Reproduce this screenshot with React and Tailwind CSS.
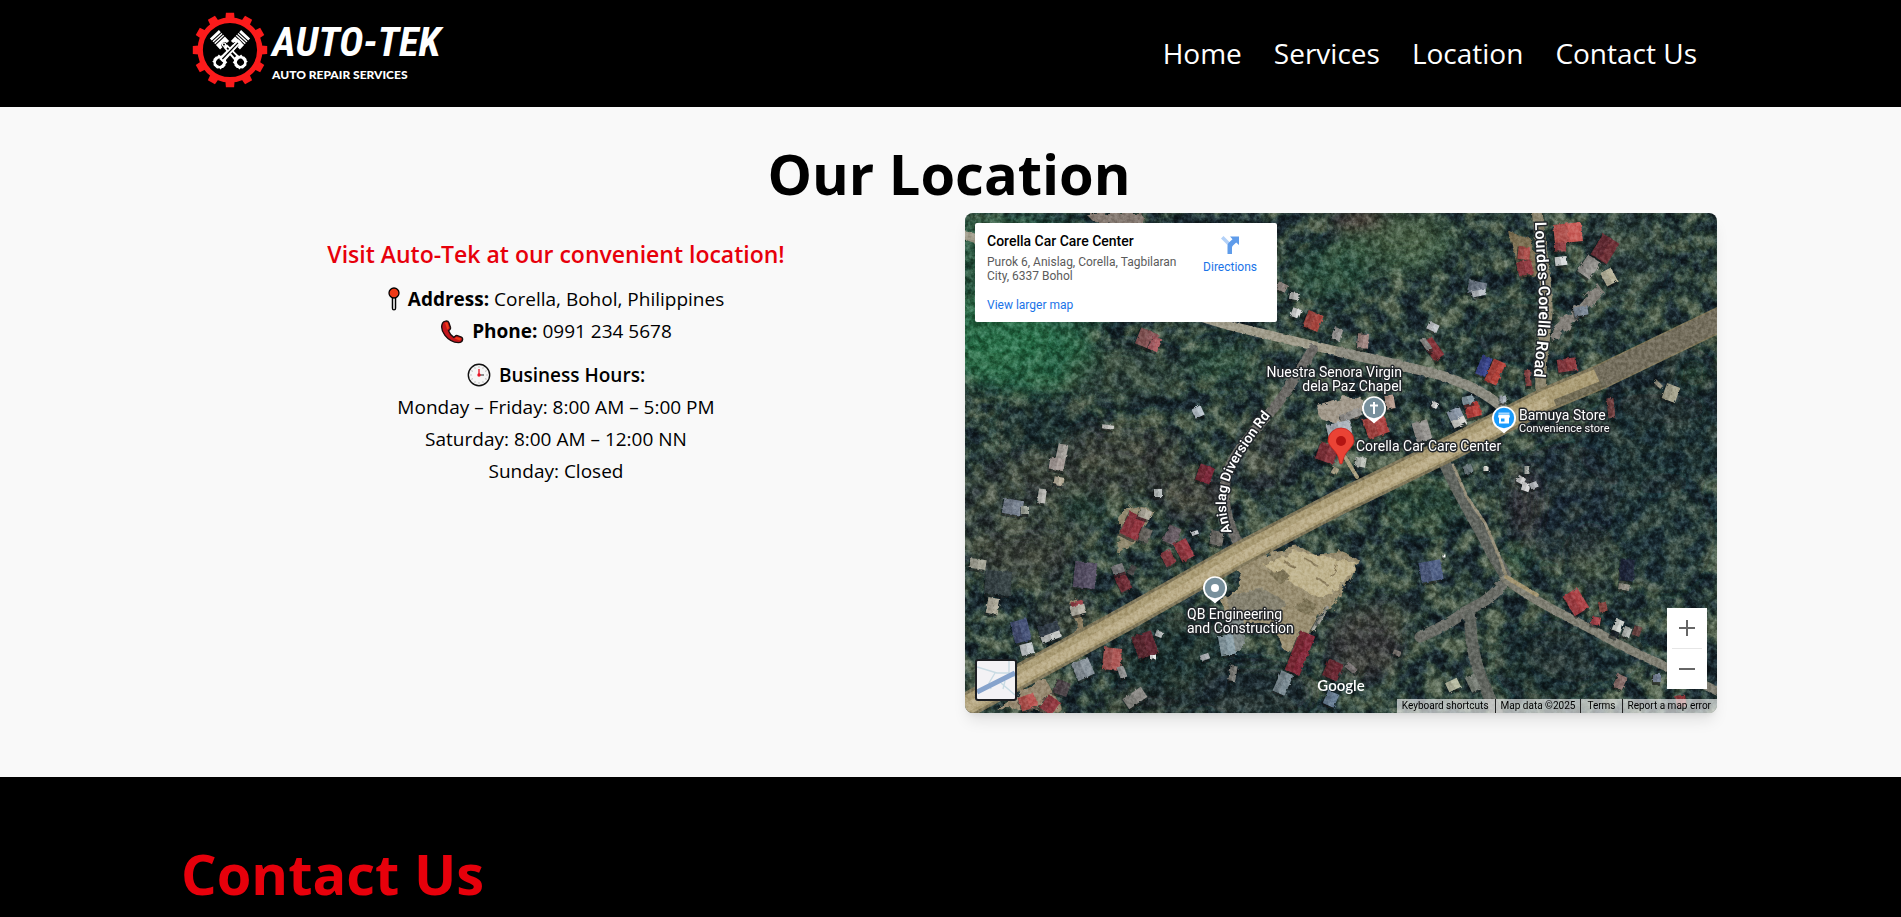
import React from "react";

const NAV = ["Home", "Services", "Location", "Contact Us"];

const TEETH = [0, 30, 60, 90, 120, 150, 180, 210, 240, 270, 300, 330];

function Piston() {
  return (
    <g>
      <path d="M-7 -26h14v3.2h-14z M-7 -21.6h14v1.6h-14z M-7 -18.8h14v1.6h-14z" fill="#fff" />
      <path d="M-7 -16h14v7h-3.5a3.5 3.5 0 0 0-7 0h-3.5z" fill="#fff" />
      <circle cx="0" cy="-10" r="2.6" fill="#fff" />
      <circle cx="0" cy="-10" r="1.1" fill="#000" />
      <path d="M-2.6 -8h5.2l1 19h-7.2z" fill="#fff" />
      <path d="M-0.9 -5h1.8l0.4 14h-2.6z" fill="#000" />
      <path d="M-6.5 11.5h2l1.5-1.5h6l1.5 1.5h2v3l1 1v4l-1 1v2h-2l-1.8 2h-5.4l-1.8-2h-2v-2l-1-1v-4l1-1z" fill="#fff" />
      <circle cx="0" cy="17.5" r="3.9" fill="#000" />
    </g>
  );
}

function Logo() {
  return (
    <a href="#home" className="flex items-center gap-1 text-white" aria-label="Auto-Tek Auto Repair Services">
      <svg viewBox="-38 -38 76 76" className="size-[76px] shrink-0" aria-hidden="true">
        <circle r="29.800" fill="none" stroke="#fb1b1b" strokeWidth="5.400" />
        {TEETH.map((a) => (
          <path key={a} d="M-4.6 -31L-4.1 -37.200H4.1L4.6 -31z" fill="#fb1b1b" transform={`rotate(${a})`} />
        ))}
        <g transform="translate(0 1) rotate(43) scale(.88)">
          <Piston />
        </g>
        <g transform="translate(0 1) rotate(-43) scale(.88)">
          <Piston />
        </g>
        <path d="M10 -9.2L-9 10.6" stroke="#fff" strokeWidth="4.6" />
        <path d="M8 -7.2L-7.6 9" stroke="#000" strokeWidth="1.2" />
      </svg>
      <span className="flex flex-col">
        <span className="font-['Roboto_Condensed','Liberation_Sans_Narrow',Roboto,sans-serif] text-[41px] leading-[49px] font-bold italic">
          AUTO-TEK
        </span>
        <span className="font-[Lato,sans-serif] text-xs leading-4 font-black">AUTO REPAIR SERVICES</span>
      </span>
    </a>
  );
}

function PinIcon() {
  return (
    <svg viewBox="0 0 12 24" className="mr-2 inline-block h-6 w-3 align-[-5px]" aria-hidden="true">
      <path d="M4.4 10h3.2v11.2a1.6 1.6 0 0 1-3.2 0z" fill="#cfcfcf" stroke="#000" strokeWidth="1.3" />
      <circle cx="6" cy="6" r="5" fill="#f03a17" stroke="#000" strokeWidth="1.3" />
    </svg>
  );
}

function PhoneIcon() {
  return (
    <svg viewBox="0 0 24 24" className="mr-2 inline-block size-6 align-[-6px]" aria-hidden="true">
      <path
        d="M2.600 3C1.200 6 1.600 11 5 15.400S13.500 22.400 18.400 22.600c2.200 0 4-1.200 4.200-3.200.1-1.200-.4-1.800-1.200-2.200l-4-1.600c-1-.3-1.700 0-2.300.6l-1.300 1.100C11.800 16 9.400 13.200 8.500 10.700l1.400-1.300c.6-.6.8-1.300.5-2.100L8.900 2.800C8.400 1.500 7.100.9 5.700 1.100 4.400 1.300 3.200 1.900 2.600 3z"
        fill="#c4161c"
        stroke="#1a0d0d"
        strokeWidth="1.4"
      />
      <path d="M5 2.700L7.400 2.600L9 8L7.200 9.400z M16.300 17L21.400 18.600L19.600 20.600L14.800 18.600z" fill="#f03a17" />
    </svg>
  );
}

function ClockIcon() {
  return (
    <svg viewBox="0 0 24 24" className="mr-2 inline-block size-6 align-[-5px]" aria-hidden="true">
      <circle cx="12" cy="12" r="10.700" fill="#f6f6f6" stroke="#111" strokeWidth="1.400" />
      {TEETH.map((a) => (
        <path key={a} d="M12 3.400V4.600" stroke="#999" strokeWidth=".9" transform={`rotate(${a} 12 12)`} />
      ))}
      <path d="M12 12V6" stroke="#e81224" strokeWidth="1.300" />
      <path d="M12 12H17" stroke="#444" strokeWidth="1.200" />
      <circle cx="12" cy="12" r="1.700" fill="#e81224" />
    </svg>
  );
}

/* x, y, width, height, rotation, colour */
const HOUSES = [
  [182, 126, 19, 17, 22, "#8c5a5c"], [190, 131, 10, 14, 22, "#b06468"],
  [233, 199, 10, 10, -25, "#b9c4cc"], [97, 239, 10, 16, 12, "#a9a6a0"], [143, 214, 12, 4, 8, "#c8c8c4"],
  [348, 108, 16, 17, 22, "#a84a42"], [331, 100, 9, 9, 20, "#dadada"], [329, 83, 9, 7, 10, "#b9bab8"], [317, 74, 10, 8, 25, "#8f8580"], [372, 121, 9, 12, 20, "#9c9a98"],
  [603, 20, 28, 19, -6, "#c95f5a"], [595, 34, 12, 9, 0, "#984448"], [559, 40, 12, 13, 6, "#b0524f"], [560, 55, 15, 14, -14, "#963f46"],
  [596, 48, 12, 9, -6, "#d9dcdc"], [640, 36, 19, 24, 32, "#6f3038"], [624, 54, 15, 20, 34, "#9a9894"], [644, 64, 12, 15, -28, "#b8b49c"], [616, 98, 14, 9, -10, "#7d8a98"],
  [512, 75, 18, 13, 12, "#6f7a88"], [514, 80, 14, 6, -12, "#bcc2c8"],
  [468, 114, 11, 8, 25, "#c4c8cc"], [468, 136, 12, 22, -36, "#86343a"], [461, 131, 6, 14, -36, "#8b8a88"], [398, 128, 11, 15, 4, "#a48a86"],
  [519, 153, 11, 20, 22, "#3d4a90"], [530, 159, 13, 24, 24, "#b4443e"], [602, 152, 19, 13, -8, "#8f3c42"], [563, 165, 6, 16, -6, "#8a4444"],
  [508, 197, 15, 14, -14, "#bc4440"], [491, 203, 14, 15, -25, "#909cac"], [494, 209, 14, 8, -25, "#d6d6d2"], [503, 187, 12, 8, -14, "#8498a2"],
  [457, 218, 16, 20, -16, "#9a9894"], [538, 186, 7, 7, 0, "#b0b8c0"], [470, 192, 6, 6, 30, "#dcdcdc"],
  [411, 213, 22, 20, -20, "#b04846"], [425, 189, 9, 14, -10, "#b89c90"], [386, 202, 22, 8, -22, "#9a9894"], [374, 216, 24, 13, -14, "#b0b8c0"],
  [362, 240, 19, 18, 20, "#86343c"], [396, 249, 10, 10, 10, "#c0c4bc"], [370, 258, 6, 7, 30, "#aaa288"],
  [240, 261, 15, 17, 20, "#7c2c3a"], [706, 180, 14, 16, 20, "#aaa892"], [693, 171, 10, 4, 45, "#9a9684"], [646, 195, 7, 20, -6, "#744444"],
  [92, 251, 15, 12, 10, "#aaa09c"], [94, 268, 10, 8, 10, "#b8b09c"], [77, 283, 8, 14, 8, "#bcbcb8"],
  [48, 294, 20, 15, 10, "#7c8694"], [60, 297, 8, 8, 0, "#a4aaa0"],
  [168, 313, 18, 24, 26, "#943842"], [180, 301, 12, 9, 20, "#b4b0a2"], [180, 322, 11, 14, 22, "#6c6864"], [193, 280, 8, 8, 0, "#bac0c0"],
  [207, 322, 13, 18, 24, "#6c6068"], [219, 337, 14, 20, -28, "#9c3e46"], [203, 345, 11, 15, -28, "#8a3c44"], [230, 320, 7, 4, -20, "#ccd0d4"], [252, 325, 13, 14, 10, "#74726c"],
  [158, 369, 12, 18, -25, "#74303a"], [153, 356, 12, 9, -20, "#7c7c7e"], [167, 357, 6, 10, 30, "#4c4a4a"],
  [33, 370, 26, 24, 4, "#3a464a"], [13, 351, 16, 10, 8, "#a6a698"], [28, 393, 12, 16, 10, "#b4b0a0"],
  [120, 362, 22, 26, 6, "#5c546a"], [112, 391, 12, 6, -14, "#a04850"], [113, 397, 15, 9, -14, "#b8b4a8"],
  [56, 418, 17, 22, -14, "#48557a"], [62, 436, 13, 11, -14, "#c4cacc"], [84, 416, 21, 11, -20, "#363f4c"], [86, 424, 20, 7, -20, "#c8cac8"],
  [118, 456, 18, 18, -24, "#8e98a0"], [147, 446, 18, 22, 6, "#ae5a58"], [157, 459, 7, 12, -20, "#9a9a9a"], [180, 432, 21, 24, -20, "#642c34"], [194, 421, 7, 6, 20, "#b8bcbc"], [188, 444, 6, 5, 0, "#ececec"],
  [170, 485, 22, 12, -34, "#8e8c88"], [63, 489, 17, 14, -20, "#bc5854"], [85, 492, 14, 16, 34, "#963c44"], [97, 475, 14, 14, 20, "#50464c"],
  [262, 432, 15, 20, -10, "#8ea2aa"], [268, 460, 7, 16, 10, "#7e7e7a"], [240, 444, 9, 6, -20, "#acb0b4"], [335, 440, 16, 42, 22, "#842c3a"], [318, 470, 13, 22, 24, "#7e8e96"], [368, 457, 16, 18, 24, "#6c2c34"], [366, 486, 12, 14, 24, "#6c8298"],
  [352, 410, 3, 18, 30, "#b4b4ac"], [358, 402, 3, 20, 30, "#9a9a92"],
  [503, 256, 9, 8, -20, "#6e7c80"], [521, 256, 5, 4, 0, "#dcdcd4"], [556, 267, 8, 7, 30, "#cccccc"], [561, 274, 8, 8, 20, "#dcdcdc"], [569, 272, 8, 6, -20, "#b8bcc0"], [562, 257, 5, 8, 0, "#b0b4b0"],
  [466, 358, 22, 20, -10, "#536488"], [479, 343, 3, 3, 0, "#fff"],
  [611, 389, 17, 23, -32, "#ae444a"], [638, 394, 8, 9, -10, "#8c4a44"], [631, 408, 9, 8, 10, "#ae4a50"], [662, 357, 14, 22, 4, "#20293c"], [659, 374, 11, 6, 10, "#98948a"],
  [653, 413, 9, 13, 22, "#d0d4d0"], [662, 419, 8, 10, 22, "#b8bcb8"], [650, 421, 8, 6, 22, "#1a2028"], [672, 418, 8, 10, 20, "#6c4644"],
  [488, 472, 13, 10, -26, "#bcc0a8"], [508, 470, 10, 16, -26, "#7e847c"], [655, 469, 10, 14, 24, "#8c726e"], [692, 465, 8, 8, 0, "#768296"], [716, 488, 10, 12, -10, "#943c40"],
  [386, 455, 6, 12, -50, "#7e7878"], [432, 440, 8, 5, 20, "#7c7672"],
];

/* cx, cy, rx, ry, colour, opacity */
const PATCHES = [
  [40, 70, 120, 70, "#22583f", 0.7], [60, 145, 75, 34, "#256845", 0.85], [25, 122, 60, 38, "#2a7049", 0.8],
  [430, 30, 60, 30, "#3c5c42", 0.8], [365, 60, 40, 26, "#27523c", 0.75], [395, 8, 30, 10, "#4a3a38", 0.9], [440, 20, 34, 20, "#4e6248", 0.6],
  [255, 150, 34, 20, "#264e3a", 0.7], [160, 160, 60, 26, "#344a3a", 0.6], [80, 215, 50, 30, "#142a2c", 0.5],
  [55, 345, 50, 26, "#40463a", 0.6], [60, 300, 70, 60, "#424238", 0.35], [140, 260, 90, 24, "#42443a", 0.5], [160, 230, 60, 18, "#453c3a", 0.4],
  [120, 295, 26, 16, "#234636", 0.6], [230, 285, 34, 22, "#484038", 0.55], [300, 240, 30, 40, "#45423e", 0.3],
  [210, 450, 60, 50, "#16232a", 0.6], [290, 480, 60, 30, "#18262c", 0.75], [400, 430, 38, 36, "#3e3b38", 0.75], [420, 400, 30, 14, "#434a40", 0.5],
  [460, 290, 40, 30, "#23452f", 0.5], [625, 345, 20, 28, "#4c5a48", 0.6], [552, 346, 12, 8, "#28583a", 0.7],
  [660, 40, 40, 50, "#2c463c", 0.4], [700, 170, 60, 40, "#14262a", 0.5], [690, 230, 80, 50, "#192830", 0.55], [600, 290, 60, 60, "#162532", 0.5],
  [580, 450, 50, 40, "#1a2a2e", 0.5], [560, 120, 50, 30, "#182c2c", 0.35], [728, 160, 8, 6, "#2f5c32", 0.7], [560, 290, 14, 36, "#45383a", 0.5],
  [100, 400, 30, 30, "#424238", 0.4], [185, 490, 50, 12, "#2a322e", 0.5], [620, 440, 60, 30, "#1c2c34", 0.4], [700, 320, 50, 60, "#1f3038", 0.4],
];

function LabelPin({ x, y, fill, children }) {
  return (
    <g transform={`translate(${x} ${y})`}>
      <path d="M0 15.500C-2.500 13-5 11.500-7.500 9.600A12 12 0 1 1 7.500 9.600C5 11.500 2.500 13 0 15.500z" fill="#fff" />
      <circle r="10.200" fill={fill} />
      {children}
    </g>
  );
}

function Satellite() {
  return (
    <svg
      viewBox="0 0 752 500"
      preserveAspectRatio="xMidYMid slice"
      className="absolute inset-0 size-full font-[Roboto,sans-serif]"
      role="img"
      aria-label="Satellite map around Corella Car Care Center"
    >
      <defs>
        <filter id="forest" x="0" y="0" width="100%" height="100%" colorInterpolationFilters="sRGB">
          <feTurbulence type="fractalNoise" baseFrequency="0.05" numOctaves="6" seed="8" />
          <feColorMatrix values="2.100 1.300 0 0 -1.220  2.100 1.300 0 0 -1.220  2.100 1.300 0 0 -1.220  0 0 0 0 1" />
          <feComponentTransfer>
            <feFuncR type="table" tableValues="0.08 0.11 0.17 0.25 0.36" />
            <feFuncG type="table" tableValues="0.13 0.18 0.26 0.33 0.42" />
            <feFuncB type="table" tableValues="0.16 0.19 0.23 0.27 0.34" />
          </feComponentTransfer>
        </filter>
        <filter id="canopy" x="0" y="0" width="100%" height="100%" colorInterpolationFilters="sRGB">
          <feTurbulence type="fractalNoise" baseFrequency="0.13" numOctaves="5" seed="21" />
          <feColorMatrix values="2.600 0 0 0 -0.800  2.600 0 0 0 -0.800  2.600 0 0 0 -0.800  0 0 0 0 1" />
        </filter>
        <filter id="grain" x="0" y="0" width="100%" height="100%" colorInterpolationFilters="sRGB">
          <feTurbulence type="fractalNoise" baseFrequency="0.3" numOctaves="3" seed="3" />
          <feColorMatrix values="2.400 0 0 0 -0.700  2.400 0 0 0 -0.700  2.400 0 0 0 -0.700  0 0 0 0 1" />
        </filter>
        <filter id="rough" x="-20%" y="-20%" width="140%" height="140%">
          <feTurbulence type="fractalNoise" baseFrequency="0.12" numOctaves="3" seed="5" result="n" />
          <feDisplacementMap in="SourceGraphic" in2="n" scale="9" />
        </filter>
        <filter id="edge" x="-5%" y="-5%" width="110%" height="110%">
          <feTurbulence type="fractalNoise" baseFrequency="0.25" numOctaves="2" seed="2" result="n" />
          <feDisplacementMap in="SourceGraphic" in2="n" scale="3" />
        </filter>
        <filter id="soft" x="-40%" y="-40%" width="180%" height="180%">
          <feGaussianBlur stdDeviation="8" />
        </filter>
        <path id="lourdes" d="M570 9C571 40 574 70 574 95C574 120 570 140 568 178" />
        <path id="anislag" d="M267 319C254 288 263 262 284 232C294 218 301 206 322 184" />
      </defs>

      <rect width="752" height="500" filter="url(#forest)" />
      <g filter="url(#soft)">
        {PATCHES.map(([cx, cy, rx, ry, c, o]) => (
          <ellipse key={`${cx}-${cy}`} cx={cx} cy={cy} rx={rx} ry={ry} fill={c} opacity={o} />
        ))}
      </g>
      <rect width="752" height="500" filter="url(#canopy)" className="opacity-45 mix-blend-soft-light" />

      <g filter="url(#rough)">
        <path
          d="M270 345L300 340L335 333L350 342L375 338L394 346L386 366L372 388L354 404L345 425L334 440L318 436L308 412L264 408L256 388L276 372z"
          fill="#9a8f72"
        />
        <path d="M298 352L330 338L372 346L392 350L376 372L356 386L330 372z" fill="#c0b48f" />
        <path d="M262 384L296 374L320 388L312 404L268 404z" fill="#86826f" />
        <path d="M304 360L318 356L326 364L314 370z M340 384L352 392L346 404L330 396z" fill="#7e7458" />
        <path d="M318 348l12 6M340 346l14 8M352 366l10 5M372 352l-6 12" stroke="#8a7c5c" strokeWidth="2" />
        <path d="M352 192L378 184L398 186L392 204L372 212L356 206z" fill="#a39a8c" />
        <path d="M120 0L178 0L180 12L130 10z" fill="#857a72" />
        <path d="M545 20L566 26L572 60L556 66z" fill="#7c7052" />
        <path d="M30 495L80 465L100 500z" fill="#988a72" />
        <path d="M104 390L112 410L108 424L120 418L112 386z" fill="#8c7e62" />
        <path d="M156 300L166 292L190 298L170 330L152 340z" fill="#928a70" />
        <path d="M262 405L276 404L282 432L268 440z" fill="#808a88" />
        <path d="M610 95L632 70L640 80L600 118L588 130L586 116z" fill="#84807a" />
      </g>

      <g fill="none" strokeLinecap="round" strokeLinejoin="round" filter="url(#edge)">
        <path d="M0 22C90 52 180 88 262 112L375 139" stroke="#a19d8c" strokeWidth="9" />
        <path d="M375 139L425 150L475 162C505 172 520 180 537 194" stroke="#8c8b80" strokeWidth="10" />
        <path d="M348 136C334 158 322 180 308 196C286 222 268 240 262 262C256 286 262 310 274 332" stroke="#6c6b66" strokeWidth="10" />
        <path d="M572 -4C576 40 583 80 582 100C580 130 574 150 576 180" stroke="#8e8770" strokeWidth="11" />
        <path d="M478 246C490 276 510 306 526 338C534 352 540 360 541 366" stroke="#626660" strokeWidth="12" />
        <path d="M488 252L502 284L520 310L532 338L541 362" stroke="#968f7a" strokeWidth="3" />
        <path d="M540 368C526 388 508 394 498 400C484 412 468 418 455 424" stroke="#6c6e67" strokeWidth="11" />
        <path d="M505 402C506 440 512 460 532 500" stroke="#626660" strokeWidth="12" />
        <path d="M541 366C556 380 590 398 622 414L665 437L702 454L752 478" stroke="#828175" strokeWidth="9" />
        <path d="M541 364L572 382" stroke="#a2946f" strokeWidth="4" />
        <path d="M380 244L392 264" stroke="#a89e80" strokeWidth="4" />
      </g>
      <path d="M-5 496L162 405L275 341L375 289L480 238L582 186L635 164L760 104" fill="none" stroke="#80775a" strokeWidth="25" />
      <path d="M-5 496L162 405L275 341L375 289L480 238L582 186L633 165" fill="none" stroke="#ab9d76" strokeWidth="19" />
      <path d="M-5 498L162 408L275 344L375 292L480 241L582 188" fill="none" stroke="#bcae8a" strokeWidth="9" />
      <path d="M633 165L760 104" fill="none" stroke="#756f5e" strokeWidth="22" />
      <path d="M590 190L640 170" fill="none" stroke="#676350" strokeWidth="7" opacity=".8" />

      <g filter="url(#edge)">
        {HOUSES.map(([x, y, w, h, r, c]) => (
          <g key={`${x}-${y}`} transform={`translate(${x} ${y}) rotate(${r})`}>
            <rect x={-w / 2 - 1} y={-h / 2 + 1} width={w} height={h + 2} fill="#0c1518" opacity=".55" />
            <rect x={-w / 2} y={-h / 2} width={w} height={h} fill={c} />
            <rect x={-w / 2} y={-h / 2} width={w / 2} height={h} fill="#000" opacity=".12" />
          </g>
        ))}
      </g>

      <rect width="752" height="500" filter="url(#grain)" className="opacity-25 mix-blend-soft-light" />

      <g fill="#fff" stroke="#22262a" strokeWidth="3" strokeLinejoin="round" className="[paint-order:stroke]">
        <text fontSize="16" fontWeight="600">
          <textPath href="#lourdes">Lourdes-Corella Road</textPath>
        </text>
        <text fontSize="14" fontWeight="600">
          <textPath href="#anislag">Anislag Diversion Rd</textPath>
        </text>
        <g fontSize="14">
          <text x="437" y="164" textAnchor="end">Nuestra Senora Virgin</text>
          <text x="437" y="178" textAnchor="end">dela Paz Chapel</text>
          <text x="391" y="238">Corella Car Care Center</text>
          <text x="554" y="207">Bamuya Store</text>
          <text x="222" y="406">QB Engineering</text>
          <text x="222" y="420">and Construction</text>
        </g>
        <text x="554" y="219" fontSize="11">Convenience store</text>
      </g>

      <LabelPin x={409} y={195} fill="#78909c">
        <path d="M0 -6V6M-4 -2.500H4" stroke="#fff" strokeWidth="2" />
      </LabelPin>
      <LabelPin x={539} y={205} fill="#1a9bfc">
        <path d="M-5.500 -5.500H5.500V-3.500H-5.500z" fill="#a8d8ff" />
        <path d="M-5.500 -3.200H5.500L6 -0.500H5V5.500H-5V-0.500H-6z M-3 0.500V3.500H0.500V0.500z" fill="#fff" fillRule="evenodd" />
      </LabelPin>
      <LabelPin x={250} y={375} fill="#78909c">
        <circle r="4" fill="#fff" />
      </LabelPin>

      <path
        d="M376 251C375 251 374.500 250 374.200 248C373 241 370 238.500 367 235C364.500 232 363 229 363 228A13 13 0 1 1 389 228C389 230 387.500 232.500 385 235.500C382 239 379 242 377.800 248C377.500 250 377 251 376 251z"
        fill="#ea4335"
        stroke="#c5221f"
        strokeWidth=".8"
      />
      <circle cx="376" cy="228" r="5" fill="#b31412" />
      <text x="376" y="478" textAnchor="middle" fill="#fff" fontSize="15" fontWeight="600" className="font-[Lato,sans-serif]">
        Google
      </text>
    </svg>
  );
}

function PlaceCard() {
  return (
    <div className="absolute top-2.5 left-2.5 flex w-[302px] justify-between rounded-[2px] bg-white pt-2 pr-5 pb-2.5 pl-3 font-[Roboto,sans-serif] text-xs leading-[14px]">
      <div>
        <h3 className="text-sm leading-5 font-medium text-black">Corella Car Care Center</h3>
        <address className="mt-1 w-[200px] text-[#5b5b5b] not-italic">Purok 6, Anislag, Corella, Tagbilaran City, 6337 Bohol</address>
        <a href="#map" className="mt-[15px] block text-[#1a73e8]">View larger map</a>
      </div>
      <a href="#directions" className="flex flex-col items-center gap-1 self-start pt-[3px] text-[#1a73e8]">
        <svg viewBox="0 0 22 22" className="size-[22px]" aria-hidden="true">
          <path d="M2 4.500L4.500 2L12 9.500L9.500 12z" fill="#b3d1f8" />
          <path d="M8.500 20V12.500C8.500 10.500 9 9.500 10.500 8L13.500 5.200L11 2.500H20V11L17.200 8.500L14 11.500C13.300 12.200 13 12.700 13 13.500V20z" fill="#5f9cea" />
        </svg>
        Directions
      </a>
    </div>
  );
}

function MapView() {
  return (
    <div id="map" className="relative h-[500px] overflow-hidden rounded-lg shadow-lg">
      <Satellite />
      <PlaceCard />
      <button
        type="button"
        aria-label="Show street map"
        className="absolute bottom-3 left-2.5 size-[42px] overflow-hidden rounded-[3px] border-2 border-[#1c1e22] bg-[#f3f2f5]"
      >
        <svg viewBox="0 0 38 38" className="size-full" fill="none" aria-hidden="true">
          <path d="M0 6L20 12L32 12L38 16M32 0V12M18 12L12 22L14 28M24 22L38 34M28 20L26 28" stroke="#c9dbe3" strokeWidth="1.400" />
          <path d="M0 31L38 12" stroke="#86a3cc" strokeWidth="5" />
        </svg>
      </button>
      <div className="absolute right-2.5 bottom-6 flex w-10 flex-col items-stretch bg-white">
        <button type="button" aria-label="Zoom in" className="flex h-10 items-center justify-center">
          <svg viewBox="0 0 18 18" className="size-[18px]" aria-hidden="true">
            <path d="M9 1V17M1 9H17" stroke="#666" strokeWidth="2" />
          </svg>
        </button>
        <span className="mx-[5px] h-px bg-[#e6e6e6]" />
        <button type="button" aria-label="Zoom out" className="flex h-10 items-center justify-center">
          <svg viewBox="0 0 18 18" className="size-[18px]" aria-hidden="true">
            <path d="M1 9H17" stroke="#666" strokeWidth="2" />
          </svg>
        </button>
      </div>
      <div className="absolute right-0 bottom-0 flex divide-x divide-[#222] font-[Roboto,sans-serif] text-[10px] leading-[14px] text-black">
        <button type="button" className="bg-[#f5f5f5]/65 pr-1.5 pl-[5px]">Keyboard shortcuts</button>
        <span className="bg-[#f5f5f5]/65 px-[5px]">Map data ©2025</span>
        <a href="#terms" className="bg-[#f5f5f5]/65 px-1.5">Terms</a>
        <a href="#report" className="bg-[#f5f5f5]/65 pr-1.5 pl-[5px]">Report a map error</a>
      </div>
    </div>
  );
}

export default function App() {
  return (
    <div className="flex h-screen flex-col overflow-hidden bg-black font-['Segoe_UI','Open_Sans',sans-serif] text-black">
      <header className="shrink-0 bg-black pr-[3px]">
        <div className="mx-auto flex h-[107px] max-w-[1536px] items-center justify-between pr-5 pl-[11px]">
          <div className="pb-[7px]">
            <Logo />
          </div>
          <nav className="pb-0.5">
            <ul className="flex gap-8 text-[28px] leading-9 text-white">
              {NAV.map((n) => (
                <li key={n}>
                  <a href={`#${n}`}>{n}</a>
                </li>
              ))}
            </ul>
          </nav>
        </div>
      </header>

      <section className="shrink-0 bg-[#f9f9f9] pt-9 pr-[3px] pb-16">
        <div className="mx-auto max-w-[1536px]">
          <h2 className="mb-2.5 text-center text-[56px] leading-[60px] font-bold">Our Location</h2>
          <div className="grid grid-cols-2 gap-8">
            <div className="pt-[25px] pr-0.5 text-center text-[19px] leading-8">
              <h3 className="mb-[13px] text-[23px] leading-8 font-semibold text-[#e7000b]">Visit Auto-Tek at our convenient location!</h3>
              <p>
                <PinIcon />
                <strong>Address:</strong> Corella, Bohol, Philippines
              </p>
              <p>
                <PhoneIcon />
                <strong>Phone:</strong> 0991 234 5678
              </p>
              <p className="mt-3 font-semibold">
                <ClockIcon />
                Business Hours:
              </p>
              <p>Monday – Friday: 8:00 AM – 5:00 PM</p>
              <p>Saturday: 8:00 AM – 12:00 NN</p>
              <p>Sunday: Closed</p>
            </div>
            <MapView />
          </div>
        </div>
      </section>

      <section className="grow bg-black pt-[66px] pr-[3px]">
        <div className="mx-auto max-w-[1536px]">
          <h2 className="text-[56px] leading-[60px] font-bold text-[#e7000b]">Contact Us</h2>
        </div>
      </section>
    </div>
  );
}
